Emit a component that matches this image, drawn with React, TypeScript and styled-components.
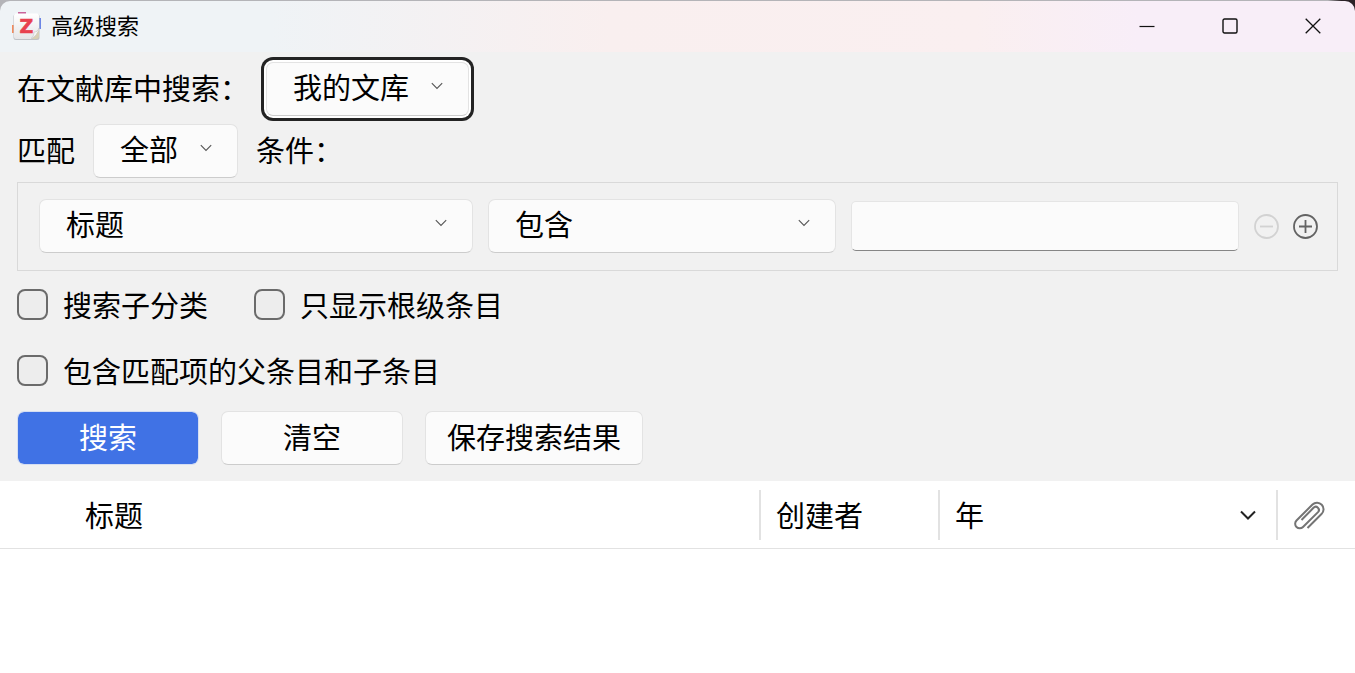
import React from "react";
import styled, { createGlobalStyle, css } from "styled-components";

const GlobalStyle = createGlobalStyle`
  *, *::before, *::after { box-sizing: border-box; }
  body {
    margin: 0;
    background: linear-gradient(90deg, #b4b4b8 0 98%, #2b2226 99%) top / 100% 40px no-repeat, #ffffff;
    color: #000000;
    font-family: "Noto Sans CJK SC", sans-serif;
    font-size: 29px;
    line-height: 32px;
  }
  button, input, select { font: inherit; color: inherit; margin: 0; }
`;

const Window = styled.div`
  display: flex;
  flex-direction: column;
  min-height: 100vh;
  padding-top: 1px;
`;

const TitleBar = styled.header`
  display: flex;
  align-items: center;
  height: 51px;
  padding: 0 1px 2px 12px;
  border-radius: 10px 10px 0 0;
  background: linear-gradient(90deg, #eff3f6 0%, #eff3f6 20%, #f9efef 45%, #faeff0 72%, #f8eef8 84%, #f8eef8 100%);
`;

const Title = styled.h1`
  flex: 1;
  margin: 0 0 0 10px;
  padding-bottom: 4px;
  font-size: 22px;
  font-weight: 400;
  line-height: 32px;
`;

const CaptionButton = styled.button`
  display: grid;
  place-items: center;
  width: 83px;
  height: 48px;
  padding: 0;
  border: 0;
  background: transparent;
`;

const Form = styled.form`
  display: flex;
  flex-direction: column;
  padding: 10px 17px 16px;
  background: #f1f1f1;
`;

const Row = styled.div<{ $gap: number; $top?: number }>`
  display: flex;
  align-items: center;
  gap: ${(p) => p.$gap}px;
  margin-top: ${(p) => p.$top ?? 0}px;
`;

const RowLabel = styled.label`
  padding-bottom: 4px;
`;

const controlFace = css`
  height: 54px;
  border: 1px solid #e3e3e3;
  border-bottom-color: #cccccc;
  border-radius: 7px;
  background: #fbfbfb;
`;

const SelectBox = styled.span<{ $width?: number }>`
  display: grid;
  grid-template-columns: 1fr auto;
  align-items: center;
  width: ${(p) => (p.$width ? `${p.$width}px` : "auto")};

  svg {
    grid-area: 1 / 2;
    margin: 0 26px 6px 0;
    pointer-events: none;
  }
`;

const Select = styled.select<{ $focused?: boolean }>`
  ${controlFace}
  grid-area: 1 / 1 / 2 / 3;
  width: 100%;
  padding: 0 26px 6px;
  appearance: none;
  outline: none;
  box-shadow: ${(p) => (p.$focused ? "0 0 0 2px #ffffff, 0 0 0 5px #232323" : "none")};
`;

const Conditions = styled.fieldset`
  display: grid;
  grid-template-columns: 434fr 348fr 388fr auto;
  align-items: center;
  gap: 15px;
  min-width: 0;
  margin: 4px 0 0;
  padding: 16px 19px 17px 21px;
  border: 1px solid #d9d9d9;
`;

const TextField = styled.input`
  width: 100%;
  min-width: 0;
  height: 50px;
  padding: 0 12px;
  border: 1px solid #e5e5e5;
  border-bottom-color: #868686;
  border-radius: 5px;
  background: #fbfbfb;
  outline: none;
`;

const RoundButtons = styled.div`
  display: flex;
  gap: 14px;
`;

const RoundButton = styled.button`
  display: grid;
  padding: 0;
  border: 0;
  background: transparent;
  color: #636363;

  &:disabled { color: #d2d2d2; }
`;

const CheckLabel = styled.label`
  display: flex;
  align-items: center;
  gap: 15px;
  height: 31px;
`;

const CheckText = styled.span`
  padding-bottom: 2px;
`;

const Check = styled.input`
  appearance: none;
  width: 31px;
  height: 31px;
  border: 2px solid #6b6b6b;
  border-radius: 8px;
  background: #ededed;
`;

const PushButton = styled.button<{ $primary?: boolean }>`
  ${controlFace}
  min-width: 182px;
  padding: 0 21px 4px;
  ${(p) =>
    p.$primary &&
    css`
      border-color: #d5def2;
      background: #4072e5;
      background-clip: padding-box;
      color: #ffffff;
    `}
`;

const Results = styled.table`
  width: 100%;
  border-collapse: separate;
  border-spacing: 0;
  table-layout: fixed;
  background: #ffffff;
`;

const HeadCell = styled.th<{ $width?: number }>`
  width: ${(p) => (p.$width ? `${p.$width}px` : "auto")};
  height: 68px;
  padding: 0;
  border-bottom: 1px solid #e2e2e2;
  font-weight: 400;
  text-align: left;
`;

const HeadContent = styled.div<{ $first?: boolean }>`
  display: flex;
  align-items: center;
  justify-content: space-between;
  height: 50px;
  margin-top: 1px;
  padding: 0 20px 0 ${(p) => (p.$first ? 85 : 15)}px;
  border-left: ${(p) => (p.$first ? "0" : "2px solid #e2e2e2")};
`;

const HeadText = styled.span`
  padding-bottom: 2px;
`;

const Chevron = () => (
  <svg width="12" height="8" viewBox="0 0 12 8" fill="none" stroke="#555" strokeWidth="1.1" aria-hidden="true">
    <path d="M.8 1.200 6 6.400l5.200-5.200" />
  </svg>
);

const AppIcon = () => (
  <svg width="29" height="30" viewBox="0 0 29 30" overflow="visible" aria-hidden="true">
    <defs>
      <linearGradient id="paper" x2="0" y2="1">
        <stop stopColor="#ffffff" />
        <stop offset="1" stopColor="#e6e6e8" />
      </linearGradient>
    </defs>
    <rect x="6" y="1" width="8" height="4" fill="#c9649a" />
    <rect x="0" y="14" width="4" height="8" fill="#f58a5c" />
    <rect x="25" y="7" width="4" height="11" fill="#6c86e6" />
    <rect x="1.500" y="3" width="26" height="26" rx="2.500" fill="#bfc2c6" />
    <path d="M4 2.600h21a2 2 0 0 1 2 2v15.400l-7 8H4a2 2 0 0 1-2-2V4.600a2 2 0 0 1 2-2Z" fill="url(#paper)" />
    <path d="M27 19v6a3 3 0 0 1-3 3h-4Z" fill="#d8d0b4" />
    <path d="m25 20v3h-3Z" fill="#d8bf3c" />
    <path d="M27 17c-1 3-3 4-5 4 0 3-1 5-3 6.500 4-1.500 7-5 8-10.500Z" fill="#f7f7f7" stroke="#c4c4c6" strokeWidth=".6" />
    <text x="14.500" y="21.500" textAnchor="middle" fill="#e8414f" stroke="#e8414f" strokeWidth=".6" fontFamily="DejaVu Sans, sans-serif" fontSize="19" fontWeight="700">Z</text>
  </svg>
);

const CircleIcon = ({ plus }: { plus?: boolean }) => (
  <svg width="25" height="25" viewBox="0 0 25 25" fill="none" stroke="currentColor" strokeWidth="1.800" aria-hidden="true">
    <circle cx="12.500" cy="12.500" r="11.500" />
    <path d={plus ? "M6 12.500h13M12.500 6v13" : "M6 12.500h13"} />
  </svg>
);

type PickerProps = { label: string; value: string; width?: number; focused?: boolean };

const Picker = ({ label, value, width, focused }: PickerProps) => (
  <SelectBox $width={width}>
    <Select id={label} aria-label={label} $focused={focused} defaultValue={value}>
      <option>{value}</option>
    </Select>
    <Chevron />
  </SelectBox>
);

const CheckOption = ({ text }: { text: string }) => (
  <CheckLabel>
    <Check type="checkbox" />
    <CheckText>{text}</CheckText>
  </CheckLabel>
);

export default function App() {
  return (
    <>
      <GlobalStyle />
      <Window>
        <TitleBar>
          <AppIcon />
          <Title>高级搜索</Title>
          <CaptionButton type="button" aria-label="最小化">
            <svg width="16" height="16" fill="none" stroke="#111" strokeWidth="1.200"><path d="M.5 8.500h15" /></svg>
          </CaptionButton>
          <CaptionButton type="button" aria-label="最大化">
            <svg width="16" height="16" fill="none" stroke="#111" strokeWidth="1.400"><rect x="1" y="1" width="14" height="14" rx="1.500" /></svg>
          </CaptionButton>
          <CaptionButton type="button" aria-label="关闭">
            <svg width="16" height="16" fill="none" stroke="#111" strokeWidth="1.300"><path d="m.7.7 14.600 14.600M15.300.7.7 15.300" /></svg>
          </CaptionButton>
        </TitleBar>

        <Form onSubmit={(e) => e.preventDefault()}>
          <Row $gap={17}>
            <RowLabel htmlFor="文献库">在文献库中搜索：</RowLabel>
            <Picker label="文献库" value="我的文库" width={203} focused />
          </Row>
          <Row $gap={18} $top={8}>
            <RowLabel htmlFor="匹配方式">匹配</RowLabel>
            <Picker label="匹配方式" value="全部" width={145} />
            <RowLabel as="span">条件：</RowLabel>
          </Row>

          <Conditions aria-label="条件">
            <Picker label="字段" value="标题" />
            <Picker label="运算符" value="包含" />
            <TextField type="text" aria-label="值" />
            <RoundButtons>
              <RoundButton type="button" disabled aria-label="删除条件"><CircleIcon /></RoundButton>
              <RoundButton type="button" aria-label="添加条件"><CircleIcon plus /></RoundButton>
            </RoundButtons>
          </Conditions>

          <Row $gap={46} $top={18}>
            <CheckOption text="搜索子分类" />
            <CheckOption text="只显示根级条目" />
          </Row>
          <Row $gap={46} $top={35}>
            <CheckOption text="包含匹配项的父条目和子条目" />
          </Row>
          <Row $gap={22} $top={25}>
            <PushButton type="submit" $primary>搜索</PushButton>
            <PushButton type="button">清空</PushButton>
            <PushButton type="button">保存搜索结果</PushButton>
          </Row>
        </Form>

        <Results>
          <thead>
            <tr>
              <HeadCell scope="col"><HeadContent $first><HeadText>标题</HeadText></HeadContent></HeadCell>
              <HeadCell scope="col" $width={179}><HeadContent><HeadText>创建者</HeadText></HeadContent></HeadCell>
              <HeadCell scope="col" $width={338} aria-sort="descending">
                <HeadContent>
                  <HeadText>年</HeadText>
                  <svg width="16" height="10" viewBox="0 0 16 10" fill="none" stroke="#222" strokeWidth="2" aria-hidden="true"><path d="m1 1.500 7 7 7-7" /></svg>
                </HeadContent>
              </HeadCell>
              <HeadCell scope="col" $width={79} aria-label="附件">
                <HeadContent>
                  <svg width="32" height="30" viewBox="0 0 32 30" fill="none" stroke="#747474" strokeWidth="2" aria-hidden="true">
                    <path d="M14.500 28 28.500 14a6.200 6.200 0 0 0-9-9.500L3.500 20.500a4.500 4.500 0 0 0 6.500 6.500L25 12.100a3.100 3.100 0 0 0-4.500-4.300L8.500 20" />
                  </svg>
                </HeadContent>
              </HeadCell>
            </tr>
          </thead>
          <tbody />
        </Results>
      </Window>
    </>
  );
}
